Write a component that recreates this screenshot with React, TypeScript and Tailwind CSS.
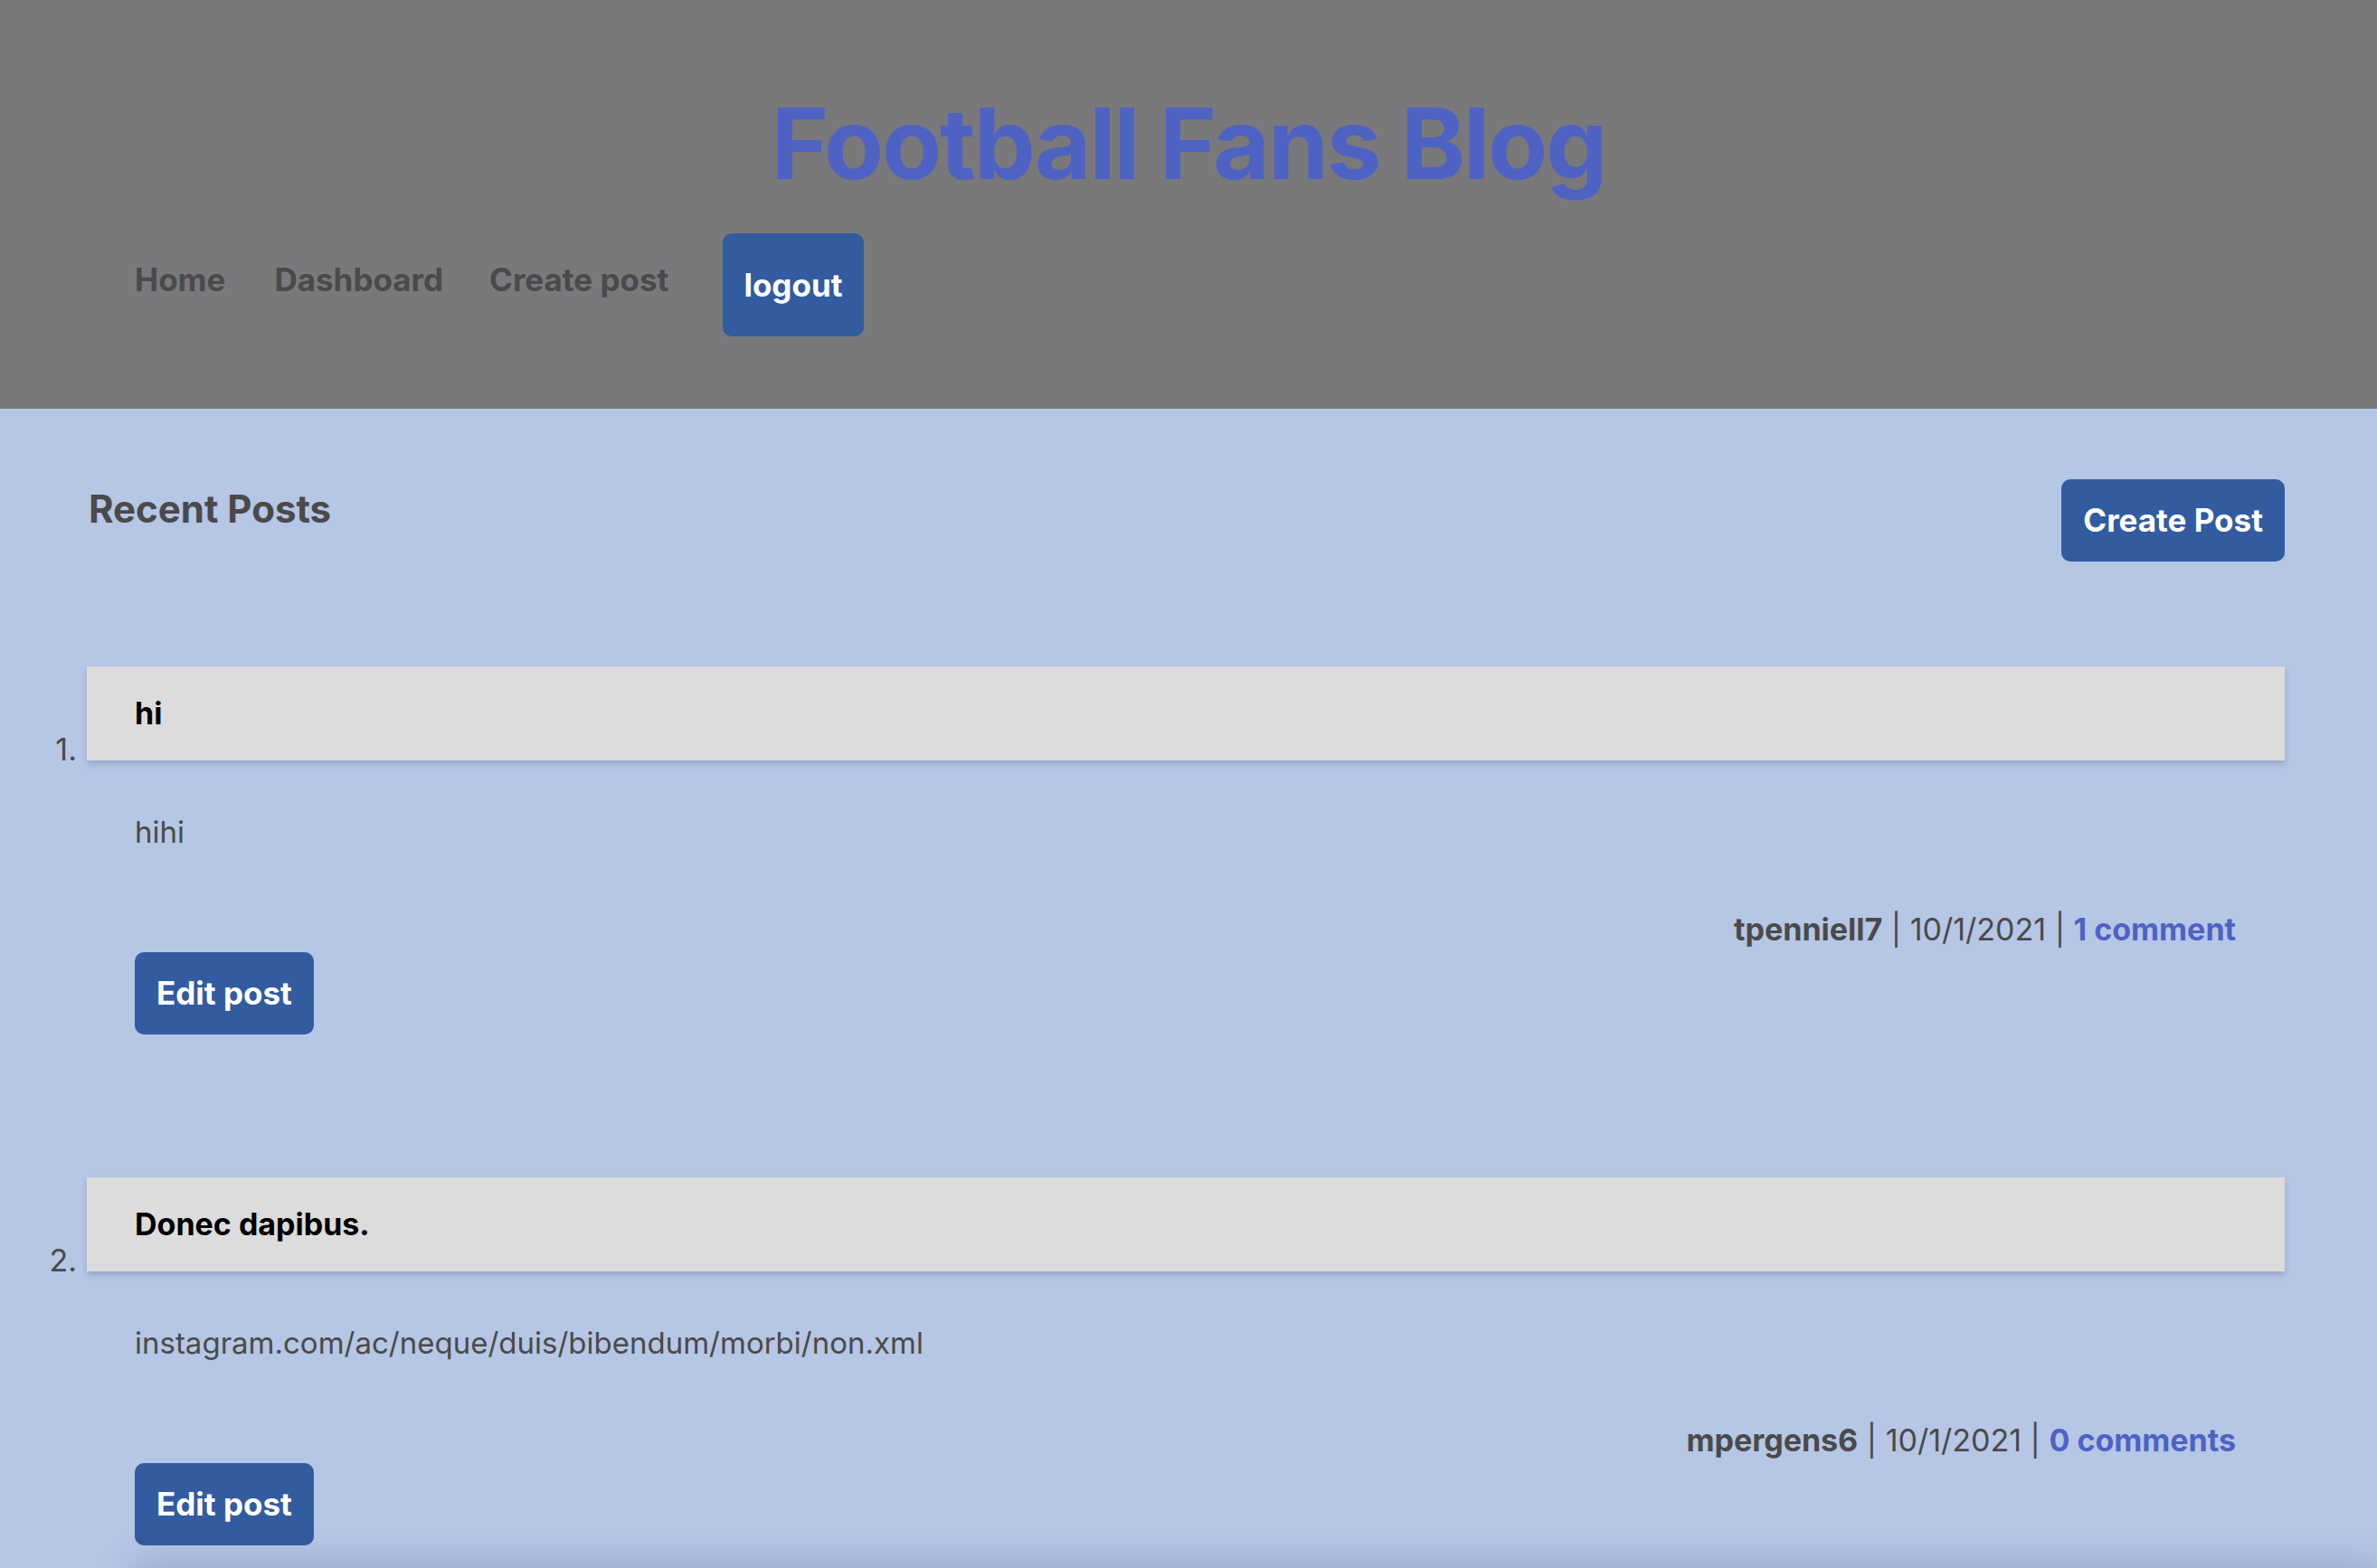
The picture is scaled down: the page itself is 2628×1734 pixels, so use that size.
import React from "react";

type Post = {
  title: string;
  body: string;
  author: string;
  date: string;
  comments: string;
};

const posts: Post[] = [
  { title: "hi", body: "hihi", author: "tpenniell7", date: "10/1/2021", comments: "1 comment" },
  {
    title: "Donec dapibus.",
    body: "instagram.com/ac/neque/duis/bibendum/morbi/non.xml",
    author: "mpergens6",
    date: "10/1/2021",
    comments: "0 comments",
  },
];

function PostItem({ post, index }: { post: Post; index: number }) {
  return (
    <li className="flex flex-col">
      {/* numero + titolo */}
      <div className="flex items-end">
        <span className="w-[96px] pr-[11px] text-right text-[34px] leading-[25px] text-[#4a4a4a]">
          {index + 1}.
        </span>
        <div className="flex-1 bg-[#dcdcdc] px-[53px] py-[35px] shadow-[0_4px_6px_rgba(60,80,120,0.25)]">
          <h3 className="text-[34px] font-bold leading-none text-black">{post.title}</h3>
        </div>
      </div>

      {/* contenuto */}
      <div className="ml-[96px] flex flex-col pl-[53px] pr-[54px]">
        <p className="mt-[63px] text-[33px] leading-none text-[#4a4a4a]">{post.body}</p>
        <p className="mt-[74px] self-end text-[34px] leading-none text-[#4a4a4a]">
          <span className="font-bold">{post.author}</span> | {post.date} |{" "}
          <a className="font-bold text-[#4e62c4]">{post.comments}</a>
        </p>
        <button className="mt-[8px] self-start rounded-[10px] bg-[#325c9f] px-[24px] py-[28px] text-[35px] font-bold leading-none text-white">
          Edit post
        </button>
      </div>
    </li>
  );
}

export default function App() {
  return (
    <div className="min-h-screen overflow-hidden bg-[#b6c6e5] font-['Inter','Liberation_Sans',sans-serif]">
      {/* header */}
      <header className="flex h-[452px] flex-col bg-[#79797b]">
        <h1 className="mt-[105px] text-center text-[108px] font-bold leading-none tracking-[-0.02em] text-[#4e62c4]">
          Football Fans Blog
        </h1>
        <nav className="mt-[45px] flex items-start pl-[149px]">
          <a className="mt-[34px] text-[35px] font-bold leading-none text-[#4a4a4a]">Home</a>
          <a className="ml-[54px] mt-[34px] text-[35px] font-bold leading-none text-[#4a4a4a]">Dashboard</a>
          <a className="ml-[51px] mt-[34px] text-[35px] font-bold leading-none text-[#4a4a4a]">Create post</a>
          <button className="ml-[60px] rounded-[10px] bg-[#325c9f] px-[23px] pb-[39px] pt-[40px] text-[35px] font-bold leading-none text-white">
            logout
          </button>
        </nav>
      </header>

      {/* post recenti */}
      <main className="flex flex-col pt-[78px]">
        <div className="flex items-start justify-between pl-[98px] pr-[102px]">
          <h2 className="mt-[12px] text-[42px] font-bold leading-none text-[#4a4a4a]">Recent Posts</h2>
          <button className="rounded-[10px] bg-[#325c9f] px-[24px] py-[28px] text-[35px] font-bold leading-none text-white">
            Create Post
          </button>
        </div>

        <ol className="mt-[116px] flex flex-col gap-[158px] pr-[102px]">
          {posts.map((p, i) => (
            <PostItem key={i} post={p} index={i} />
          ))}
        </ol>

        <div className="ml-[149px] mt-[30px] h-[120px] bg-[#b6c6e5] shadow-[0_-6px_40px_rgba(40,50,80,0.25)]" />
      </main>
    </div>
  );
}
